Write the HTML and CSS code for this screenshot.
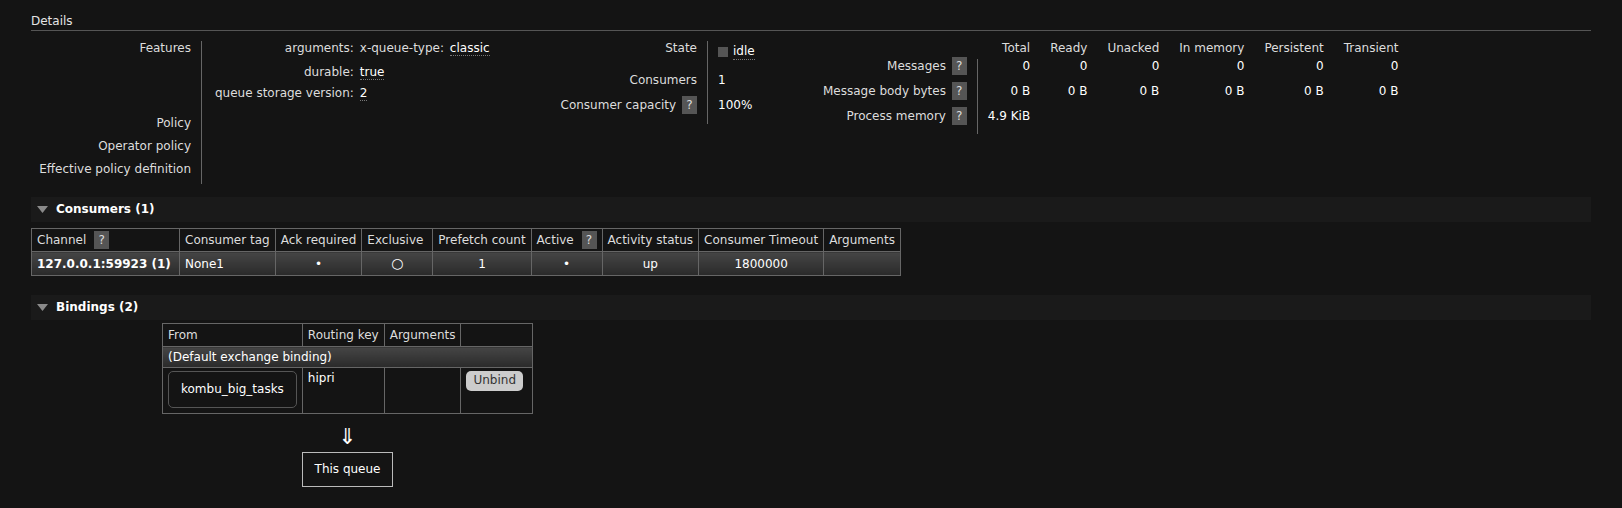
FILE: index.html
```html
<!DOCTYPE html>
<html lang="en">
<head>
    <meta charset="UTF-8">
    <title>Queue kombu_big_tasks</title>
    <link rel="stylesheet" href="styles.css">
</head>
<body>
<div class="page">
    <h2 class="details-title">Details</h2>
    <div class="details">
        <div class="block block-main">
            <table class="facts">
                <tr>
                    <th class="th-main">Features</th>
                    <td class="td-main features-cell">
                        <table class="mini">
                            <tr class="mini-first">
                                <th>arguments:</th>
                                <td><span class="arg-key">x-queue-type:</span> <span class="abbr">classic</span></td>
                            </tr>
                            <tr>
                                <th>durable:</th>
                                <td><span class="abbr">true</span></td>
                            </tr>
                            <tr>
                                <th>queue storage version:</th>
                                <td><span class="abbr">2</span></td>
                            </tr>
                        </table>
                    </td>
                </tr>
                <tr class="row-tall">
                    <th class="th-main">Policy</th>
                    <td class="td-main"></td>
                </tr>
                <tr class="row-tall">
                    <th class="th-main">Operator policy</th>
                    <td class="td-main"></td>
                </tr>
                <tr class="row-last">
                    <th class="th-main">Effective policy definition</th>
                    <td class="td-main"></td>
                </tr>
            </table>
        </div>

        <div class="block block-state">
            <table class="facts">
                <tr class="row-state">
                    <th class="th-state">State</th>
                    <td><span class="state"><span class="state-box"></span><span class="abbr">idle</span></span></td>
                </tr>
                <tr class="row-consumers">
                    <th class="th-state">Consumers</th>
                    <td>1</td>
                </tr>
                <tr class="row-capacity">
                    <th class="th-state">Consumer capacity <span class="help">?</span></th>
                    <td>100%</td>
                </tr>
            </table>
        </div>

        <div class="block block-msgs">
            <table class="facts facts-msgs">
                <thead>
                    <tr>
                        <th class="blank"></th>
                        <th>Total</th>
                        <th>Ready</th>
                        <th>Unacked</th>
                        <th>In memory</th>
                        <th>Persistent</th>
                        <th>Transient</th>
                    </tr>
                </thead>
                <tbody>
                    <tr>
                        <th>Messages <span class="help">?</span></th>
                        <td>0</td>
                        <td>0</td>
                        <td>0</td>
                        <td>0</td>
                        <td>0</td>
                        <td>0</td>
                    </tr>
                    <tr>
                        <th>Message body bytes <span class="help">?</span></th>
                        <td>0 B</td>
                        <td>0 B</td>
                        <td>0 B</td>
                        <td>0 B</td>
                        <td>0 B</td>
                        <td>0 B</td>
                    </tr>
                    <tr>
                        <th>Process memory <span class="help">?</span></th>
                        <td>4.9 KiB</td>
                        <td></td>
                        <td></td>
                        <td></td>
                        <td></td>
                        <td></td>
                    </tr>
                </tbody>
            </table>
        </div>
    </div>

    <div class="section-bar">
        <svg class="toggle" width="11" height="7" viewBox="0 0 11 7"><polygon points="0,0 11,0 5.5,7" fill="#8a8a8a"/></svg>
        <span>Consumers (1)</span>
    </div>
    <table class="list consumers">
        <thead>
            <tr>
                <th class="col-channel">Channel <span class="help">?</span></th>
                <th>Consumer tag</th>
                <th class="col-ack">Ack required</th>
                <th class="col-exclusive">Exclusive</th>
                <th>Prefetch count</th>
                <th>Active <span class="help">?</span></th>
                <th>Activity status</th>
                <th>Consumer Timeout</th>
                <th>Arguments</th>
            </tr>
        </thead>
        <tbody>
            <tr class="grad">
                <td class="left"><b>127.0.0.1:59923 (1)</b></td>
                <td class="left">None1</td>
                <td>&bull;</td>
                <td><span class="circle">&#9675;</span></td>
                <td>1</td>
                <td>&bull;</td>
                <td>up</td>
                <td>1800000</td>
                <td></td>
            </tr>
        </tbody>
    </table>

    <div class="section-bar bindings-bar">
        <svg class="toggle" width="11" height="7" viewBox="0 0 11 7"><polygon points="0,0 11,0 5.5,7" fill="#8a8a8a"/></svg>
        <span>Bindings (2)</span>
    </div>
    <div class="bindings-wrapper">
        <table class="list bindings">
            <thead>
                <tr>
                    <th>From</th>
                    <th>Routing key</th>
                    <th>Arguments</th>
                    <th></th>
                </tr>
            </thead>
            <tbody>
                <tr class="grad">
                    <td class="left default-row" colspan="4">(Default exchange binding)</td>
                </tr>
                <tr class="binding-row">
                    <td><span class="exchange">kombu_big_tasks</span></td>
                    <td>hipri</td>
                    <td></td>
                    <td><button class="unbind">Unbind</button></td>
                </tr>
            </tbody>
        </table>
        <div class="arrow">&#8659;</div>
        <span class="this-queue">This queue</span>
    </div>
</div>
</body>
</html>
```

FILE: styles.css
```css
body {
    margin: 0;
    background: #141414;
    color: #ddd;
    font-family: "DejaVu Sans", Verdana, sans-serif;
    font-size: 12px;
    line-height: 15px;
}
.page {
    padding: 0 31px;
}
.details-title {
    font-size: 12px;
    font-weight: normal;
    line-height: 15px;
    margin: 14px 0 0;
    padding-bottom: 1px;
    border-bottom: 1px solid #555;
    color: #e4e4e4;
}
.details {
    display: flex;
    align-items: flex-start;
    margin-top: 10px;
}
.block-main {
    width: 526px;
}
.block-state {
    width: 266px;
}
table {
    border-collapse: collapse;
    border-spacing: 0;
}
.facts th {
    text-align: right;
    font-weight: normal;
    color: #ddd;
    vertical-align: top;
    white-space: nowrap;
    padding: 0 10px 7px 0;
    border-right: 1px solid #666;
}
.facts td {
    vertical-align: top;
    color: #fff;
    white-space: nowrap;
    padding: 0 0 7px 10px;
}
.th-main {
    width: 160px;
}
.facts .td-main {
    padding-left: 13px;
}
.facts .features-cell {
    padding-bottom: 9px;
}
.facts .row-tall th,
.facts .row-tall td {
    padding-bottom: 8px;
}
.facts .row-last th,
.facts .row-last td {
    padding-bottom: 7px;
}
.mini th {
    border: none;
    padding: 0 6px 6px 0;
}
.mini td {
    padding: 0 0 6px 0;
}
.mini .mini-first th,
.mini .mini-first td {
    padding-bottom: 9px;
}
.arg-key {
    color: #ddd;
    margin-right: 2px;
}
.abbr {
    border-bottom: 1px dotted #777;
    color: #fff;
}
.th-state {
    width: 140px;
}
.row-state th {
    padding-bottom: 15px;
}
.facts .row-state td {
    padding-top: 3px;
    padding-bottom: 12px;
}
.facts .row-consumers th,
.facts .row-consumers td {
    padding-bottom: 10px;
}
.facts .row-capacity th,
.facts .row-capacity td {
    padding-bottom: 11px;
}
.state {
    display: inline-flex;
    align-items: center;
    gap: 5px;
}
.state-box {
    display: inline-block;
    width: 10px;
    height: 10px;
    background: #555;
}
.help {
    display: inline-block;
    width: 15px;
    height: 18px;
    line-height: 18px;
    margin: -2px 0 -1px 2px;
    vertical-align: top;
    text-align: center;
    background: #555;
    color: #ddd;
}
.facts-msgs thead th {
    border: none;
    padding: 0 10px 3px;
}
.facts-msgs thead th.blank {
    padding: 0;
}
.facts-msgs tbody th {
    padding: 0 10px 10px 0;
}
.facts-msgs tbody td {
    text-align: right;
    padding: 0 10px 10px;
}
.section-bar {
    display: flex;
    align-items: center;
    gap: 8px;
    height: 25px;
    margin-top: 13px;
    padding-left: 6px;
    background: #1a1a1a;
    color: #fff;
    font-weight: bold;
}
.bindings-bar {
    margin-top: 19px;
}
.list {
    margin-top: 6px;
}
.list th,
.list td {
    border: 1px solid #666;
    padding: 4px 5px 3px;
    white-space: nowrap;
}
.list th {
    font-weight: normal;
    text-align: left;
    color: #ddd;
    background: #141414;
}
.list th .help {
    margin-left: 4px;
}
.consumers .col-channel {
    min-width: 137px;
}
.consumers .col-ack {
    min-width: 75px;
}
.consumers .col-exclusive {
    min-width: 60px;
}
.list td {
    text-align: center;
    color: #fff;
}
.list td.left {
    text-align: left;
}
.grad td {
    background: linear-gradient(#454545, #2a2a2a);
}
.circle {
    font-size: 14px;
    line-height: 15px;
}
.bindings-wrapper {
    display: inline-block;
    margin: 3px 0 0 131px;
    text-align: center;
}
.bindings {
    margin-top: 0;
}
.bindings .default-row {
    padding: 3px 5px 2px;
}
.binding-row td {
    vertical-align: top;
    text-align: left;
    padding: 3px 5px 5px;
    background: #141414;
}
.exchange {
    display: inline-block;
    padding: 10px 12px;
    border: 1px solid #555;
    border-radius: 5px;
}
.unbind {
    font-family: inherit;
    font-size: 12px;
    line-height: 15px;
    padding: 2px 7px 3px;
    margin-right: 4px;
    border: none;
    border-radius: 5px;
    background: #ccc;
    color: #333;
}
.arrow {
    font-size: 22px;
    line-height: 22px;
    margin-top: 12px;
    color: #fff;
}
.this-queue {
    display: inline-block;
    margin-top: 4px;
    padding: 9px 12px;
    border: 1px solid #bbb;
    color: #fff;
}
```
